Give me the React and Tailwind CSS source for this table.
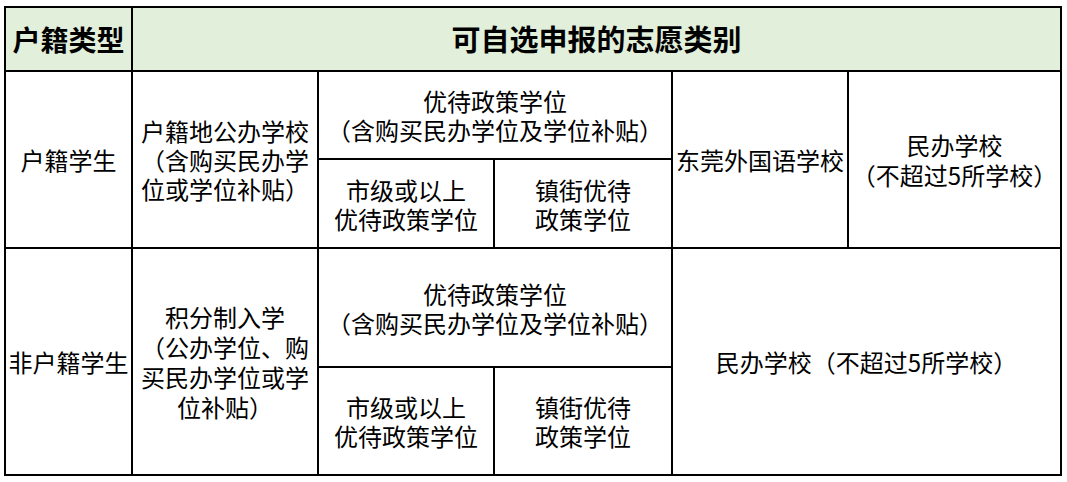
const cell =
  "bg-white flex items-center justify-center text-center text-[24px] leading-[29px] text-black";

function Lines({ lines }) {
  return (
    <div>
      {lines.map((t, i) => (
        <div key={i} className="whitespace-nowrap">
          {t}
        </div>
      ))}
    </div>
  );
}

export default function App() {
  return (
    <div
      className="w-[1067px] h-[482px] bg-white pt-[6px] pl-[4px]"
      style={{ fontFamily: '"Noto Sans CJK SC", "Noto Sans", sans-serif' }}
    >
      <div className="grid w-[1058px] bg-black p-[2px] gap-[2px] grid-cols-[125px_184px_174px_176px_174px_211px] grid-rows-[62px_86px_87px_117px_106px]">
        {/* header */}
        <div className="col-start-1 row-start-1 bg-[#e2efda] flex items-center justify-center text-[28px] font-bold text-black whitespace-nowrap">
          户籍类型
        </div>
        <div className="col-start-2 col-span-5 row-start-1 bg-[#e2efda] flex items-center justify-center text-[29px] font-bold text-black">
          可自选申报的志愿类别
        </div>

        {/* 户籍学生 */}
        <div className={`${cell} col-start-1 row-start-2 row-span-2`}>户籍学生</div>
        <div className={`${cell} col-start-2 row-start-2 row-span-2`}>
          <Lines lines={["户籍地公办学校", "（含购买民办学", "位或学位补贴）"]} />
        </div>
        <div className={`${cell} col-start-3 col-span-2 row-start-2`}>
          <Lines lines={["优待政策学位", "（含购买民办学位及学位补贴）"]} />
        </div>
        <div className={`${cell} col-start-3 row-start-3`}>
          <Lines lines={["市级或以上", "优待政策学位"]} />
        </div>
        <div className={`${cell} col-start-4 row-start-3`}>
          <Lines lines={["镇街优待", "政策学位"]} />
        </div>
        <div className={`${cell} col-start-5 row-start-2 row-span-2`}>东莞外国语学校</div>
        <div className={`${cell} col-start-6 row-start-2 row-span-2 leading-[30px]`}>
          <Lines lines={["民办学校", "（不超过5所学校）"]} />
        </div>

        {/* 非户籍学生 */}
        <div className={`${cell} col-start-1 row-start-4 row-span-2`}>非户籍学生</div>
        <div className={`${cell} col-start-2 row-start-4 row-span-2 leading-[30px]`}>
          <Lines lines={["积分制入学", "（公办学位、购", "买民办学位或学", "位补贴）"]} />
        </div>
        <div className={`${cell} col-start-3 col-span-2 row-start-4`}>
          <Lines lines={["优待政策学位", "（含购买民办学位及学位补贴）"]} />
        </div>
        <div className={`${cell} col-start-3 row-start-5`}>
          <Lines lines={["市级或以上", "优待政策学位"]} />
        </div>
        <div className={`${cell} col-start-4 row-start-5`}>
          <Lines lines={["镇街优待", "政策学位"]} />
        </div>
        <div className={`${cell} col-start-5 col-span-2 row-start-4 row-span-2`}>
          民办学校（不超过5所学校）
        </div>
      </div>
    </div>
  );
}
